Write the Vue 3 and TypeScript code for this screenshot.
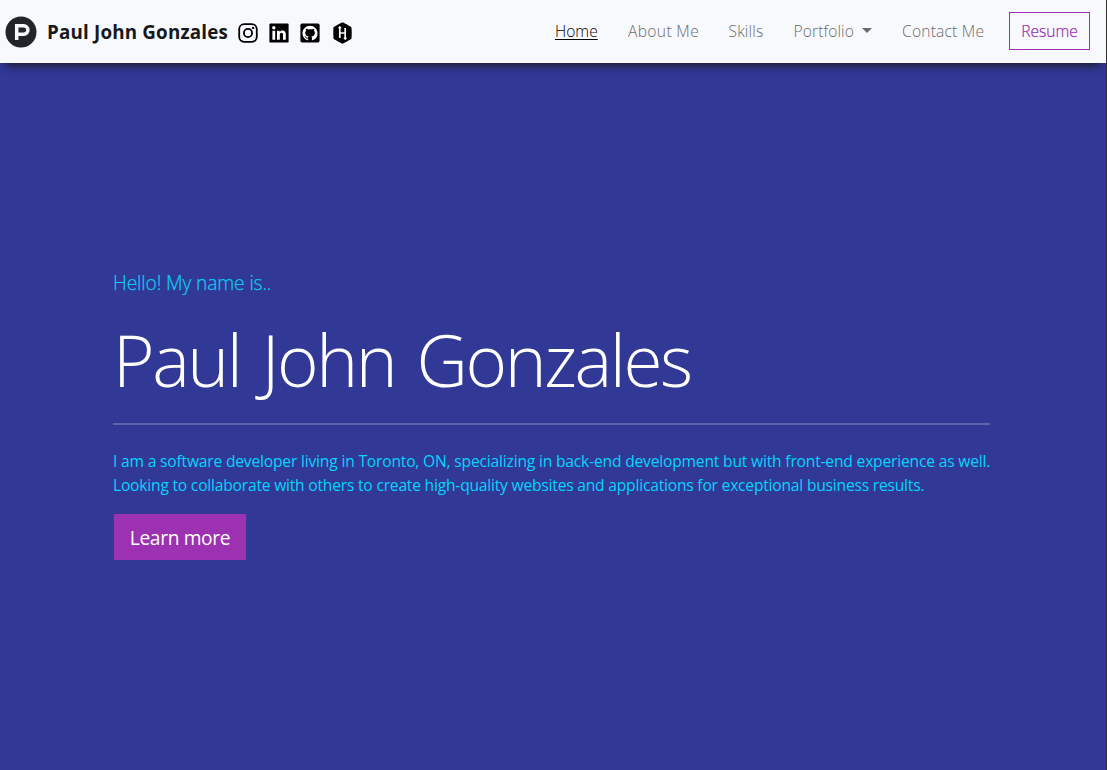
<script setup lang="ts">
interface NavItem {
  label: string
  key: string
  active?: boolean
  dropdown?: boolean
}

const navItems: NavItem[] = [
  { label: 'Home', key: 'home', active: true },
  { label: 'About Me', key: 'about' },
  { label: 'Skills', key: 'skills' },
  { label: 'Portfolio', key: 'portfolio', dropdown: true },
  { label: 'Contact Me', key: 'contact' },
]
</script>

<template>
  <div class="page">
    <header class="navbar">
      <a class="brand" href="#">
        <svg class="logo" viewBox="0 0 32 32" aria-hidden="true">
          <circle cx="16" cy="16" r="15.5" fill="#212529" />
          <path d="M11.7 24V9.8h7a4.2 4.2 0 0 1 0 8.4h-7" fill="none" stroke="#f8f9fa" stroke-width="3.5" />
        </svg>
        <span class="brand-name">Paul John Gonzales</span>
      </a>
      <div class="socials">
        <a href="#" aria-label="Instagram">
          <svg viewBox="0 0 20 20">
            <rect x="1.2" y="1.2" width="17.6" height="17.6" rx="5" fill="none" stroke="#000" stroke-width="1.8" />
            <circle cx="10" cy="10" r="4.1" fill="none" stroke="#000" stroke-width="1.8" />
            <circle cx="15.1" cy="4.9" r="1.2" fill="#000" />
          </svg>
        </a>
        <a href="#" aria-label="LinkedIn">
          <svg viewBox="0 0 20 20">
            <rect x=".4" y=".4" width="19.2" height="19.2" rx="1.2" fill="#000" />
            <circle cx="4.8" cy="4.7" r="1.7" fill="#fff" />
            <path d="M3.4 7.7h2.8v9H3.4zM8 7.7h2.7v1.2c.5-.9 1.5-1.5 2.8-1.5 2.7 0 3.3 1.8 3.3 4.2v5.1H14v-4.5c0-1.2-.1-2.4-1.5-2.4s-1.7 1.1-1.7 2.3v4.6H8z" fill="#fff" />
          </svg>
        </a>
        <a href="#" aria-label="GitHub">
          <svg viewBox="0 0 20 20">
            <rect x=".4" y=".4" width="19.2" height="19.2" rx="1.8" fill="#000" />
            <g transform="translate(2.5 2.7) scale(.94)">
              <path d="M8 0C3.58 0 0 3.58 0 8c0 3.54 2.29 6.53 5.47 7.59.4.07.55-.17.55-.38 0-.19-.01-.82-.01-1.49-2.01.37-2.53-.49-2.69-.94-.09-.23-.48-.94-.82-1.13-.28-.15-.68-.52-.01-.53.63-.01 1.08.58 1.23.82.72 1.21 1.87.87 2.33.66.07-.52.28-.87.51-1.07-1.78-.2-3.64-.89-3.64-3.95 0-.87.31-1.59.82-2.15-.08-.2-.36-1.02.08-2.12 0 0 .67-.21 2.2.82.64-.18 1.32-.27 2-.27s1.36.09 2 .27c1.53-1.04 2.2-.82 2.2-.82.44 1.1.16 1.92.08 2.12.51.56.82 1.27.82 2.15 0 3.07-1.87 3.75-3.65 3.95.29.25.54.73.54 1.48 0 1.07-.01 1.93-.01 2.2 0 .21.15.46.55.38A8.01 8.01 0 0 0 16 8c0-4.42-3.58-8-8-8z" fill="#fff" />
            </g>
          </svg>
        </a>
        <a class="hex-link" href="#" aria-label="HackerRank">
          <svg class="hex" viewBox="0 0 20 22">
            <path d="M10 .3c.6 0 8.4 4.4 8.9 5 .4.7.4 10.7 0 11.4-.5.6-8.3 5-8.9 5s-8.4-4.4-8.9-5c-.4-.7-.4-10.7 0-11.4C1.6 4.7 9.4.3 10 .3z" fill="#000" />
            <path d="M7.3 5.8v10.2M12.7 6v10.2M7.3 11h5.4" fill="none" stroke="#fff" stroke-width="1.7" />
            <path d="M7.3 3.7 9.3 6.3H5.3zM12.7 18.3l-2-2.6h4z" fill="#fff" />
          </svg>
        </a>
      </div>
      <nav class="links">
        <a
          v-for="item in navItems"
          :key="item.key"
          href="#"
          class="link"
          :class="[item.key, { active: item.active }]"
        >{{ item.label }}<span v-if="item.dropdown" class="caret"></span></a>
        <a class="resume" href="#"><span>Resume</span></a>
      </nav>
    </header>
    <main class="hero">
      <p class="greeting"><span>Hello! My name is..</span></p>
      <h1 class="title"><span>Paul John Gonzales</span></h1>
      <hr class="rule" />
      <p class="intro">
        <span class="line first">I am a software developer living in Toronto, ON, specializing in back-end development but with front-end experience as well.</span>
        <span class="line second">Looking to collaborate with others to create high-quality websites and applications for exceptional business results.</span>
      </p>
      <a class="learn" href="#"><span>Learn more</span></a>
    </main>
  </div>
</template>

<style>
body {
  margin: 0;
  overflow: hidden;
}
</style>

<style scoped>
.page {
  box-sizing: border-box;
  height: 770px;
  background: #313896;
  border-right: 1px solid #303030;
  font-family: "Open Sans", "Noto Sans", sans-serif;
  white-space: nowrap;
}
a {
  text-decoration: none;
  color: inherit;
}
.navbar {
  box-sizing: border-box;
  display: flex;
  align-items: center;
  height: 63px;
  padding: 0 16px 0 5px;
  background: #f8f9fc;
  box-shadow: 0 8px 9px -6px #181818;
}
.brand {
  display: flex;
  align-items: center;
  width: 233px;
}
.logo {
  width: 32px;
  height: 32px;
  margin-right: 10px;
}
.brand-name {
  font-size: 18.8px;
  font-weight: 700;
  letter-spacing: 0.18px;
  color: #16181b;
}
.socials {
  display: flex;
  align-items: center;
  gap: 11.2px;
  padding-top: 2px;
}
.socials a,
.socials svg {
  display: block;
  width: 20px;
  height: 20px;
}
.socials .hex-link {
  width: 21px;
}
.socials .hex {
  width: 21px;
  height: 22px;
  margin-top: -1px;
}
.links {
  display: flex;
  align-items: center;
  margin-left: auto;
  padding-bottom: 2px;
  font-size: 15.6px;
  font-weight: 300;
  color: #696b6d;
}
.link {
  display: flex;
  align-items: center;
  box-sizing: border-box;
}
.home {
  width: 73px;
}
.about {
  width: 100.5px;
  letter-spacing: 0.35px;
}
.skills {
  width: 65px;
  letter-spacing: 0.15px;
}
.portfolio {
  width: 108.5px;
  letter-spacing: 0.1px;
}
.contact {
  width: 107px;
  letter-spacing: 0.2px;
}
.active {
  color: #000;
  text-decoration: underline;
  text-underline-offset: 2px;
}
.caret {
  margin-left: 8px;
  border: 5px solid transparent;
  border-top-color: currentColor;
  border-bottom: 0;
}
.resume {
  box-sizing: border-box;
  display: flex;
  justify-content: center;
  align-items: center;
  width: 81px;
  height: 38px;
  border: 1px solid #9c2fb0;
  color: #9c27b0;
  -webkit-text-stroke: 0.2px currentColor;
}
.hero {
  width: 877px;
  margin-left: 113px;
  padding-top: 205px;
}
.greeting {
  margin: 0;
  line-height: 30px;
  font-size: 19.2px;
  font-weight: 300;
  letter-spacing: -0.12px;
  color: #0dcaf0;
  -webkit-text-stroke: 0.25px currentColor;
}
.title {
  margin: 19px 0 0;
  line-height: 86px;
  font-size: 71px;
  font-weight: 300;
  letter-spacing: -2.4px;
  word-spacing: 5.3px;
  color: #fff;
}
.rule {
  height: 2px;
  margin: 20px 0 24px;
  border: 0;
  background: #5d63ab;
}
.intro {
  margin: 0;
  font-size: 15.6px;
  line-height: 24px;
  color: #05d5fa;
}
.line {
  display: table;
}
.first {
  letter-spacing: -0.181px;
}
.second {
  letter-spacing: -0.203px;
}
.learn {
  display: flex;
  justify-content: center;
  align-items: center;
  width: 132px;
  height: 46px;
  margin: 17px 0 0 1px;
  background: #9c31b1;
  color: #fff;
  font-size: 19.2px;
  letter-spacing: -0.35px;
}
</style>
